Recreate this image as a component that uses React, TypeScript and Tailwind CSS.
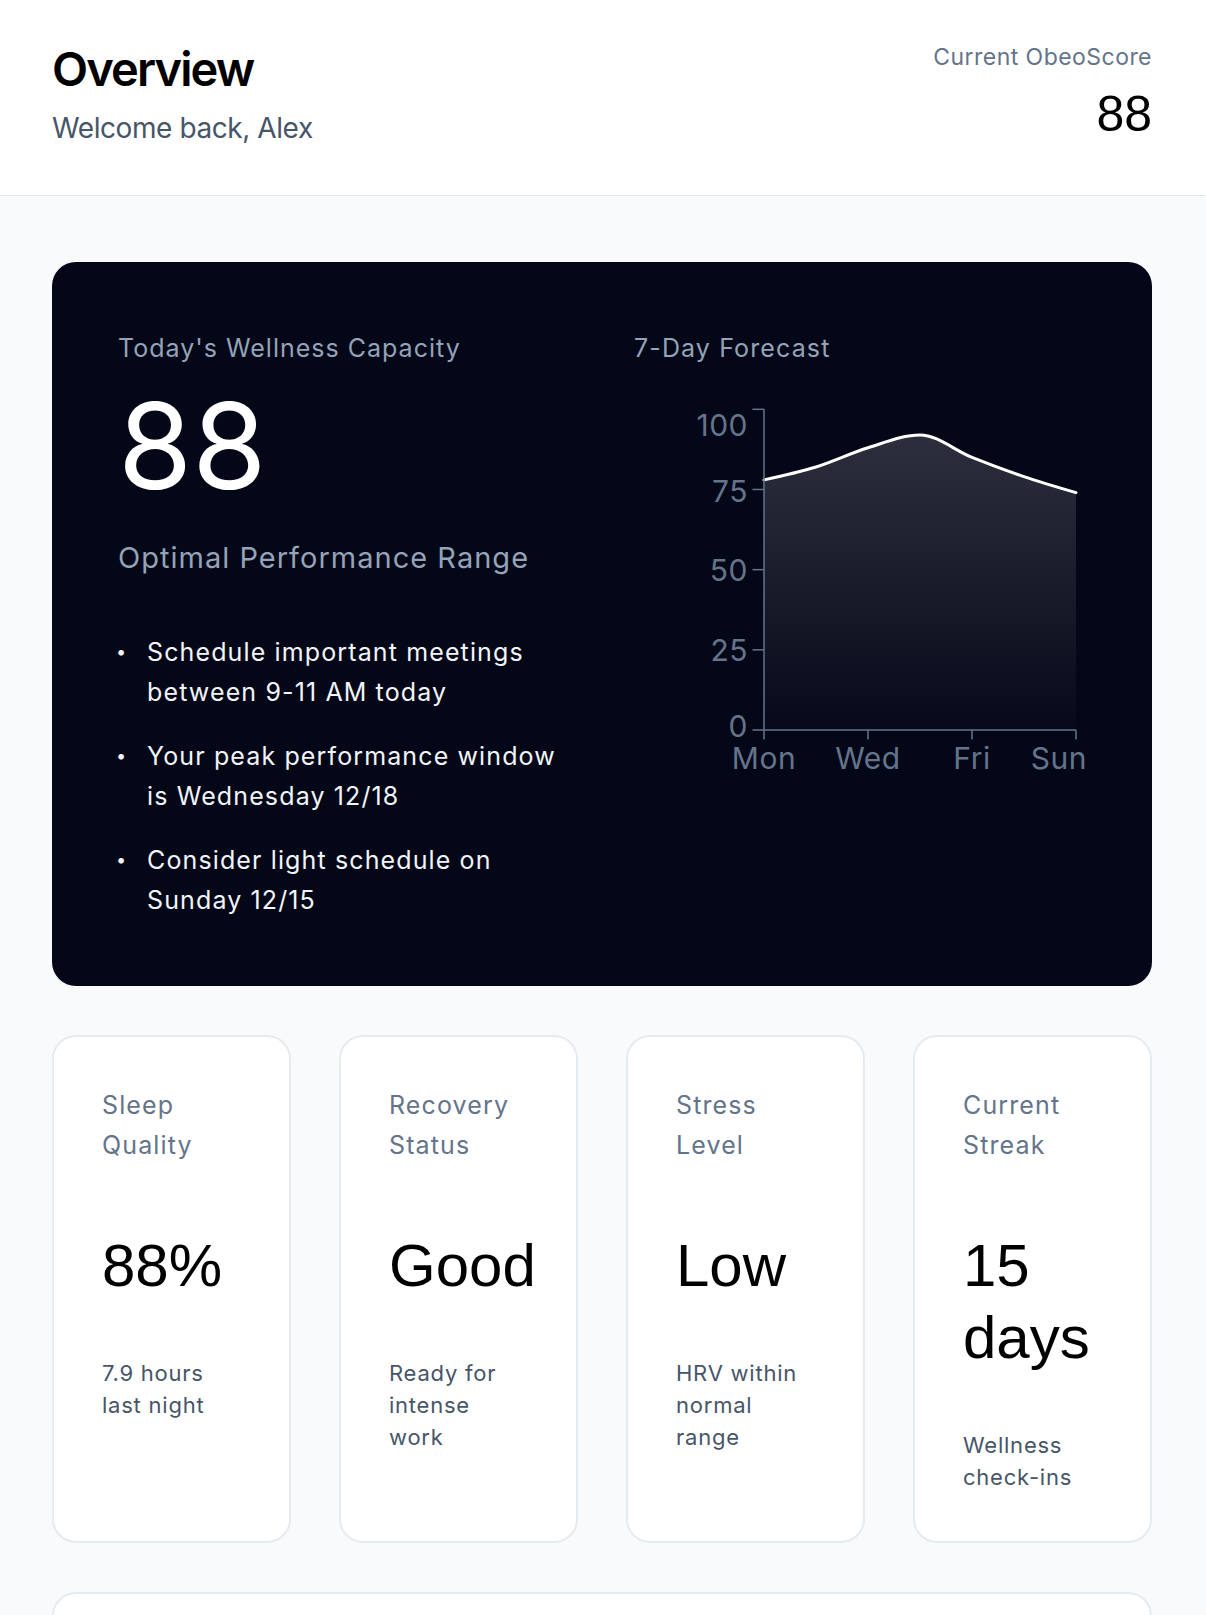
import React from "react";

const values = [78, 82, 88, 92, 85, 79, 74];
const X0 = 130;
const STEP = 52;
const Y0 = 350;
const YS = 3.207;

function sign(x: number) {
  return x < 0 ? -1 : 1;
}

function monotonePath(pts: [number, number][]) {
  const n = pts.length;
  const t: number[] = new Array(n).fill(0);
  for (let i = 1; i < n - 1; i++) {
    const [x0, y0] = pts[i - 1];
    const [x1, y1] = pts[i];
    const [x2, y2] = pts[i + 1];
    const h0 = x1 - x0;
    const h1 = x2 - x1;
    const s0 = (y1 - y0) / h0;
    const s1 = (y2 - y1) / h1;
    const p = (s0 * h1 + s1 * h0) / (h0 + h1);
    t[i] = (sign(s0) + sign(s1)) * Math.min(Math.abs(s0), Math.abs(s1), 0.5 * Math.abs(p)) || 0;
  }
  {
    const h = pts[1][0] - pts[0][0];
    t[0] = (3 * (pts[1][1] - pts[0][1]) / h - t[1]) / 2;
    const hh = pts[n - 1][0] - pts[n - 2][0];
    t[n - 1] = (3 * (pts[n - 1][1] - pts[n - 2][1]) / hh - t[n - 2]) / 2;
  }
  let d = `M${pts[0][0]},${pts[0][1]}`;
  for (let i = 0; i < n - 1; i++) {
    const [x0, y0] = pts[i];
    const [x1, y1] = pts[i + 1];
    const dx = (x1 - x0) / 3;
    d += ` C${x0 + dx},${y0 + dx * t[i]} ${x1 - dx},${y1 - dx * t[i + 1]} ${x1},${y1}`;
  }
  return d;
}

function ForecastChart() {
  const pts: [number, number][] = values.map((v, i) => [X0 + STEP * i, Y0 - YS * v]);
  const line = monotonePath(pts);
  const area = `${line} L${X0 + STEP * 6},${Y0} L${X0},${Y0} Z`;
  const yTicks = [100, 75, 50, 25, 0];
  const yLabelBase: Record<number, number> = { 100: 55.5, 75: 121.5, 50: 200.5, 25: 280.5, 0: 357 };
  const xTicks = [
    { label: "Mon", x: X0, anchor: "middle" as const, tx: X0 },
    { label: "Wed", x: X0 + STEP * 2, anchor: "middle" as const, tx: X0 + STEP * 2 },
    { label: "Fri", x: X0 + STEP * 4, anchor: "middle" as const, tx: X0 + STEP * 4 },
    { label: "Sun", x: X0 + STEP * 6, anchor: "end" as const, tx: 453 },
  ];
  const axis = "#64748b";
  return (
    <svg width={452} height={400} viewBox="0 0 452 400" className="mt-[14px] block overflow-visible">
      <defs>
        <linearGradient id="areaFill" x1="0" y1="0" x2="0" y2="1">
          <stop offset="0%" stopColor="#ffffff" stopOpacity="0.16" />
          <stop offset="100%" stopColor="#ffffff" stopOpacity="0.01" />
        </linearGradient>
      </defs>
      <path d={area} fill="url(#areaFill)" />
      <path d={line} fill="none" stroke="#ffffff" strokeWidth={3} strokeLinecap="round" />
      <line x1={X0} y1={Y0 - YS * 100} x2={X0} y2={Y0} stroke={axis} strokeWidth={1.5} />
      <line x1={X0} y1={Y0} x2={X0 + STEP * 6} y2={Y0} stroke={axis} strokeWidth={1.5} />
      {yTicks.map((v) => (
        <g key={v}>
          <line x1={118.5} y1={Y0 - YS * v} x2={X0} y2={Y0 - YS * v} stroke={axis} strokeWidth={1.5} />
          <text
            x={114}
            y={yLabelBase[v]}
            textAnchor="end"
            fill={axis}
            fontSize={30}
            letterSpacing={0.5}
            fontFamily="Inter, sans-serif"
          >
            {v}
          </text>
        </g>
      ))}
      {xTicks.map((t) => (
        <g key={t.label}>
          <line x1={t.x} y1={Y0} x2={t.x} y2={Y0 + 9.5} stroke={axis} strokeWidth={1.5} />
          <text
            x={t.tx}
            y={388.5}
            textAnchor={t.anchor}
            fill={axis}
            fontSize={30}
            letterSpacing={0.5}
            fontFamily="Inter, sans-serif"
          >
            {t.label}
          </text>
        </g>
      ))}
    </svg>
  );
}

const metrics = [
  { label: "Sleep Quality", value: "88%", sub: "7.9 hours last night" },
  { label: "Recovery Status", value: "Good", sub: "Ready for intense work" },
  { label: "Stress Level", value: "Low", sub: "HRV within normal range" },
  { label: "Current Streak", value: "15 days", sub: "Wellness check-ins" },
];

const bullets = [
  "Schedule important meetings between 9-11 AM today",
  "Your peak performance window is Wednesday 12/18",
  "Consider light schedule on Sunday 12/15",
];

export default function App() {
  return (
    <div className="min-h-screen bg-[#f8fafc] font-['Inter',sans-serif]">
      <header className="flex items-start justify-between border-b border-[#e2e8f0] bg-white pb-[49px] pl-[52px] pr-[54px] pt-[41px]">
        <div>
          <h1 className="text-[47px] font-semibold leading-[56px] tracking-[-0.04em] text-black">Overview</h1>
          <p className="mt-[13px] text-[28px] leading-[36px] tracking-[-0.015em] text-[#475569]">
            Welcome back, Alex
          </p>
        </div>
        <div className="flex flex-col items-end">
          <p className="text-[23px] leading-[32px] tracking-[0.02em] text-[#64748b]">Current ObeoScore</p>
          <p className="mt-[16px] font-['Liberation_Sans',Arial,sans-serif] text-[50px] leading-[50px] text-black">
            88
          </p>
        </div>
      </header>

      <main className="flex flex-col pb-[80px] pl-[52px] pr-[54px] pt-[66px]">
        <section className="grid grid-cols-2 gap-x-[64px] rounded-[24px] bg-[#040717] px-[66px] pb-[66px] pt-[68px]">
          <div>
            <p className="text-[25px] leading-[36px] tracking-[0.04em] text-[#94a3b8]">Today's Wellness Capacity</p>
            <p className="mt-[20px] text-[120px] font-normal leading-[120px] text-white">88</p>
            <p className="mt-[34px] text-[29px] leading-[36px] tracking-[0.035em] text-[#94a3b8]">
              Optimal Performance Range
            </p>
            <ul className="mt-[56px] flex flex-col gap-[24px]">
              {bullets.map((b) => (
                <li key={b} className="flex text-[25px] leading-[40px] tracking-[0.045em] text-[#f1f5f9]">
                  <span className="ml-[-2px] w-[31px] shrink-0 text-[18px]">•</span>
                  <span>{b}</span>
                </li>
              ))}
            </ul>
          </div>
          <div>
            <p className="text-[25px] leading-[36px] tracking-[0.045em] text-[#94a3b8]">7-Day Forecast</p>
            <ForecastChart />
          </div>
        </section>

        <section className="mt-[49px] grid grid-cols-4 gap-[48px]">
          {metrics.map((m) => (
            <div key={m.label} className="rounded-[24px] border-2 border-[#e6ebf1] bg-white p-[48px]">
              <p className="text-[25px] leading-[40px] tracking-[0.045em] text-[#64748b]">{m.label}</p>
              <p className="mt-[65px] font-['Liberation_Sans',Arial,sans-serif] text-[60px] leading-[72px] text-black">
                {m.value}
              </p>
              <p className="mt-[55px] text-[22px] leading-[32px] tracking-[0.035em] text-[#475569]">{m.sub}</p>
            </div>
          ))}
        </section>

        <section className="mt-[49px] h-[320px] rounded-[24px] border-2 border-[#e6ebf1] bg-white" />
      </main>
    </div>
  );
}
